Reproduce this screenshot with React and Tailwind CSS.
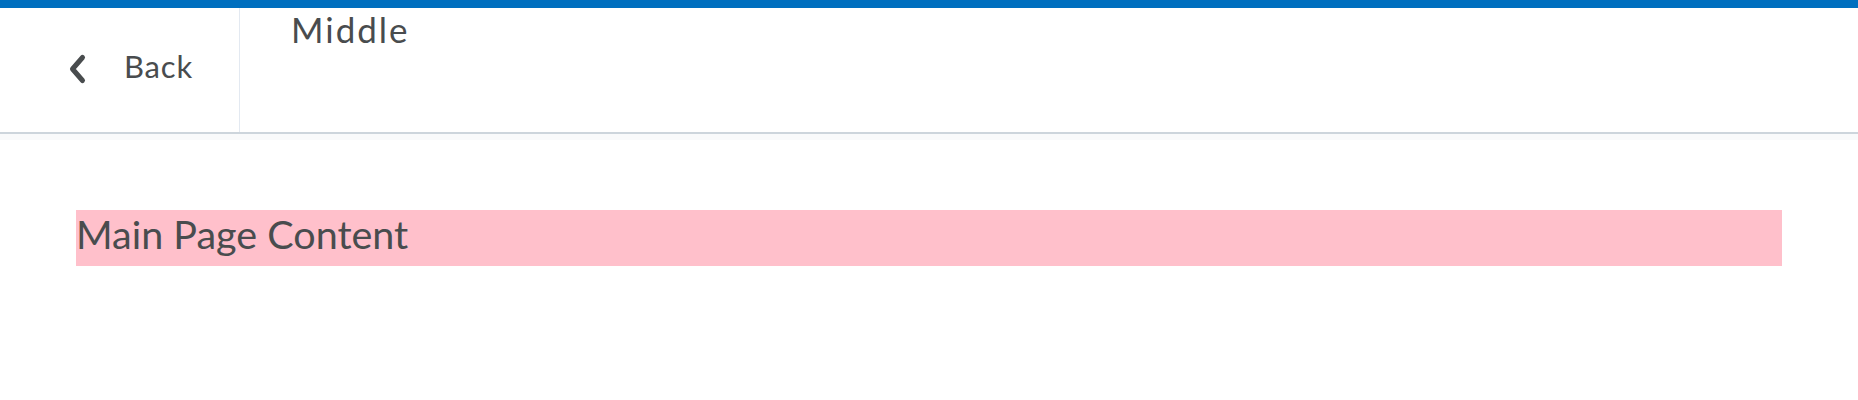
import React from 'react';

const ChevronBack = () => (
  <svg width="18" height="28" viewBox="0 0 18 28" fill="none" className="shrink-0 overflow-visible">
    <path d="M13.5 1.5 L3.5 13 L13.5 24.5" stroke="#494c4e" strokeWidth="5" strokeLinecap="round" strokeLinejoin="round" />
  </svg>
);

export default function App() {
  return (
    <div className="min-h-[400px] bg-white text-[#494c4e]" style={{ fontFamily: 'Lato, "Noto Sans", sans-serif' }}>
      {/* top brand bar */}
      <div className="h-2 bg-[#006fbf]" />

      {/* header */}
      <header className="flex h-[126px] border-b-2 border-[#cdd5dc]">
        <div className="flex w-[240px] items-center border-r border-[#e3e9f1] pl-[69px]">
          <ChevronBack />
          <span className="-mt-[8px] ml-[37px] text-[31px] leading-none tracking-[0.8px]">Back</span>
        </div>
        <div className="flex-1 pl-[51px]">
          <div className="text-[35px] leading-[42px] tracking-[2px]">Middle</div>
        </div>
      </header>
      <div className="h-[6px] bg-[#f9fafb]" />

      {/* main */}
      <main className="px-[76px] pt-[70px]">
        <div className="bg-[#ffc0cb] pb-2 text-[39.5px] leading-[48px]">Main Page Content</div>
      </main>
    </div>
  );
}
